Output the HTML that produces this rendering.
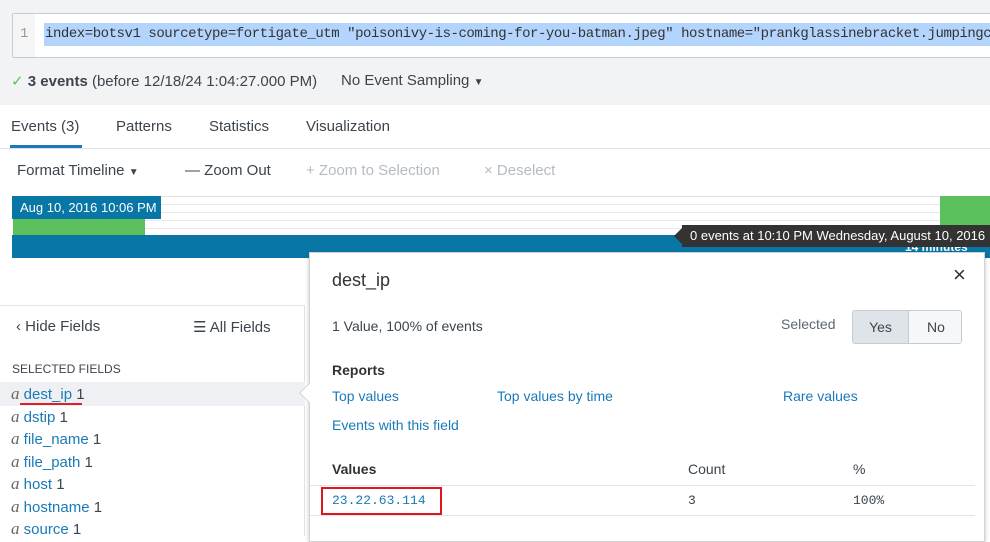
<!DOCTYPE html>
<html><head><style>
*{margin:0;padding:0;box-sizing:border-box}
body{width:990px;height:536px;overflow:hidden;position:relative;background:#fff;font-family:"Liberation Sans",sans-serif;color:#3c444d;font-size:15px}
.a{position:absolute;white-space:nowrap}
.mono{font-family:"Liberation Mono","DejaVu Sans Mono",monospace}
.link{color:#1a7ab8}
.fl div{height:22.5px;line-height:22.5px;overflow:visible}
.fl i{font-family:'Liberation Serif',serif;color:#666;font-size:17px;line-height:10px}
</style></head><body>
<div class="a" style="left:0;top:0;width:990px;height:105px;background:#f2f3f5"></div>
<div class="a" style="left:12px;top:13px;width:990px;height:45px;background:#fff;border:1px solid #c3cbd4;border-radius:2px"></div>
<div class="a" style="left:13px;top:14px;width:22px;height:43px;background:#f5f5f5"></div>
<div class="a mono" style="left:20px;top:26px;font-size:14px;color:#999">1</div>
<div class="a" style="left:44px;top:23px;width:946px;height:23px;background:#b3d4fc"></div>
<div class="a mono" style="left:45px;top:26px;font-size:14px;color:#333;letter-spacing:-0.45px">index=botsv1 sourcetype=fortigate_utm "poisonivy-is-coming-for-you-batman.jpeg" hostname="prankglassinebracket.jumpingcrab</div>
<div class="a" style="left:11px;top:72px;color:#3c444d"><span style="color:#5cc05c">✓</span> <b>3 events</b> (before 12/18/24 1:04:27.000 PM)</div>
<div class="a" style="left:341px;top:72px">No Event Sampling <span style="font-size:10px">▼</span></div>
<div class="a" style="left:11px;top:118px">Events (3)</div>
<div class="a" style="left:116px;top:118px">Patterns</div>
<div class="a" style="left:209px;top:118px">Statistics</div>
<div class="a" style="left:306px;top:118px">Visualization</div>
<div class="a" style="left:0;top:148px;width:990px;height:1px;background:#dde2e6"></div>
<div class="a" style="left:10px;top:145px;width:72px;height:3px;background:#1a7ab8"></div>
<div class="a" style="left:17px;top:162px">Format Timeline <span style="font-size:10px">▼</span></div>
<div class="a" style="left:185px;top:162px">— Zoom Out</div>
<div class="a" style="left:306px;top:162px;color:#b5bcc4">+ Zoom to Selection</div>
<div class="a" style="left:484px;top:162px;color:#b5bcc4">× Deselect</div>
<div class="a" style="left:12px;top:196px;width:978px;height:40px;background:repeating-linear-gradient(#fff 0,#fff 7px,#e8eaec 7px,#e8eaec 8px);border-top:1px solid #e0e0e0"></div>
<div class="a" style="left:12px;top:196px;width:149px;height:23px;background:#0877a6;color:#fff;font-size:13px;padding:4px 0 0 8px">Aug 10, 2016 10:06 PM</div>
<div class="a" style="left:13px;top:219px;width:132px;height:16px;background:#5cc05c"></div>
<div class="a" style="left:940px;top:196px;width:50px;height:39px;background:#5cc05c"></div>
<div class="a" style="left:12px;top:235px;width:978px;height:23px;background:#0877a6"></div>
<div class="a" style="left:905px;top:240px;color:#fff;font-size:12px;font-weight:bold">14 minutes</div>
<div class="a" style="left:682px;top:225px;width:308px;height:22px;background:#333;color:#fff;font-size:13px;padding:3px 0 0 8px">0 events at 10:10 PM Wednesday, August 10, 2016</div>
<div class="a" style="left:674px;top:228px;width:0;height:0;border-top:8px solid transparent;border-bottom:8px solid transparent;border-right:8px solid #333"></div>
<div class="a" style="left:0;top:305px;width:305px;height:1px;background:#e4e7ea"></div>
<div class="a" style="left:304px;top:305px;width:1px;height:231px;background:#dde2e6"></div>
<div class="a" style="left:16px;top:318px;font-size:15px">‹ Hide Fields</div>
<div class="a" style="left:193px;top:318px;font-size:15px">☰ All Fields</div>
<div class="a" style="left:12px;top:362px;font-size:12px;color:#3c444d">SELECTED FIELDS</div>
<div class="a" style="left:0;top:382px;width:305px;height:24px;background:#eef0f3"></div>
<div class="a" style="left:20px;top:403px;width:62px;height:2px;background:#d9202b"></div>
<div class="a fl" style="left:11px;top:384px;font-size:15px">
<div><i>a</i> <span class="link">dest_ip</span> 1</div>
<div><i>a</i> <span class="link">dstip</span> 1</div>
<div><i>a</i> <span class="link">file_name</span> 1</div>
<div><i>a</i> <span class="link">file_path</span> 1</div>
<div><i>a</i> <span class="link">host</span> 1</div>
<div><i>a</i> <span class="link">hostname</span> 1</div>
<div><i>a</i> <span class="link">source</span> 1</div>
</div>
<div class="a" style="left:309px;top:252px;width:676px;height:290px;background:#fff;border:1px solid #d0d5da;box-shadow:0 1px 4px rgba(0,0,0,.25)"></div>
<div class="a" style="left:302px;top:386px;width:14px;height:14px;background:#fff;transform:rotate(45deg);border-left:1px solid #d0d5da;border-bottom:1px solid #d0d5da"></div>
<div class="a" style="left:332px;top:270px;font-size:18px;color:#333">dest_ip</div>
<div class="a" style="left:953px;top:262px;font-size:22px;color:#333">×</div>
<div class="a" style="left:332px;top:318px;font-size:14px">1 Value, 100% of events</div>
<div class="a" style="left:781px;top:316px;font-size:14px;color:#5c6773">Selected</div>
<div class="a" style="left:852px;top:310px;width:110px;height:34px;border:1px solid #c3cbd4;border-radius:3px;overflow:hidden;font-size:14px">
<div class="a" style="left:0;top:0;width:56px;height:32px;background:#dfe4e9;text-align:center;padding-top:8px;border-right:1px solid #c3cbd4">Yes</div>
<div class="a" style="left:56px;top:0;width:54px;height:32px;background:#f5f7f8;text-align:center;padding-top:8px">No</div></div>
<div class="a" style="left:332px;top:362px;font-size:14px;font-weight:bold;color:#333">Reports</div>
<div class="a link" style="left:332px;top:388px;font-size:14px">Top values</div>
<div class="a link" style="left:497px;top:388px;font-size:14px">Top values by time</div>
<div class="a link" style="left:783px;top:388px;font-size:14px">Rare values</div>
<div class="a link" style="left:332px;top:417px;font-size:14px">Events with this field</div>
<div class="a" style="left:332px;top:461px;font-size:14px;font-weight:bold;color:#333">Values</div>
<div class="a" style="left:688px;top:461px;font-size:14px">Count</div>
<div class="a" style="left:853px;top:461px;font-size:14px">%</div>
<div class="a" style="left:310px;top:485px;width:665px;height:1px;background:#e1e4e7"></div>
<div class="a" style="left:310px;top:515px;width:665px;height:1px;background:#e1e4e7"></div>
<div class="a mono link" style="left:332px;top:493px;font-size:13px">23.22.63.114</div>
<div class="a mono" style="left:688px;top:493px;font-size:13px">3</div>
<div class="a mono" style="left:853px;top:493px;font-size:13px">100%</div>
<div class="a" style="left:321px;top:487px;width:121px;height:28px;border:2px solid #e0161e"></div>
</body></html>
